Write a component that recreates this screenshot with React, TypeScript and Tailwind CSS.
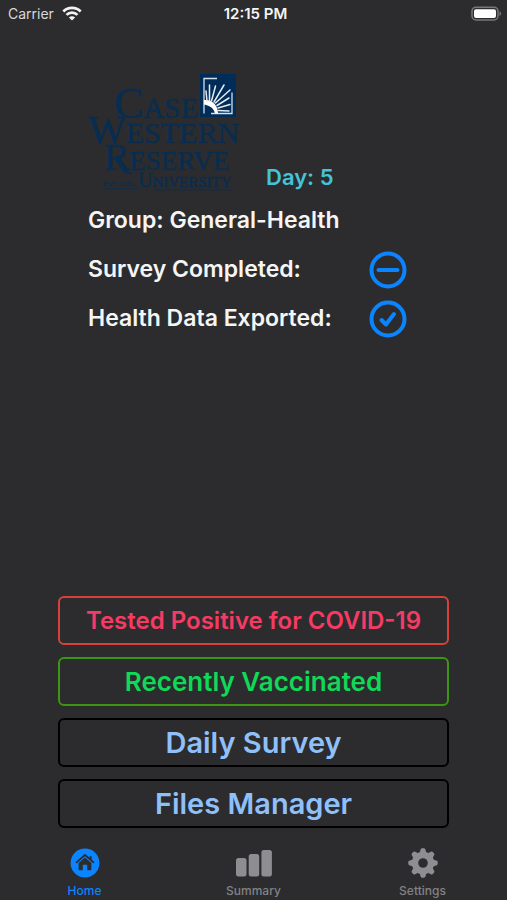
import type { ReactNode } from 'react';

function WifiIcon() {
  return (
    <svg className="h-4 w-5" viewBox="0 0 20 16" fill="none" stroke="#f2f2f2" strokeWidth="2.7" aria-hidden="true">
      <path d="M1.300 5.500a12.300 12.300 0 0 1 17.400 0" />
      <path d="M4.500 8.900a7.800 7.800 0 0 1 11 0" />
      <path d="M10 14.600 6.900 11.500a4.400 4.400 0 0 1 6.200 0Z" fill="#f2f2f2" stroke="none" />
    </svg>
  );
}

function BatteryIcon() {
  return (
    <svg className="h-4 w-8" viewBox="0 0 32 16" aria-hidden="true">
      <rect x="1" y="1.200" width="26" height="12.800" rx="4" fill="#2c2c2e" stroke="#77777a" strokeWidth="1.500" />
      <rect x="3" y="3.200" width="22" height="8.800" rx="2" fill="#fff" />
      <path d="M28.500 5.200c2.200 1 2.200 3.800 0 4.800Z" fill="#77777a" />
    </svg>
  );
}

function UniversityLogo() {
  return (
    <svg
      className="h-[120px] w-[154px]"
      viewBox="88 73 154 120"
      fill="#092d50"
      fontFamily="'Liberation Serif', serif"
      fontWeight="normal"
      role="img"
      aria-label="Case Western Reserve University"
    >
      <g stroke="#092d50" strokeWidth="0.500">
        <text x="114" y="118" fontSize="44">
          C<tspan fontSize="29">ASE</tspan>
        </text>
        <text x="88" y="143" fontSize="40">
          W<tspan fontSize="30">ESTERN</tspan>
        </text>
        <text x="104" y="170" fontSize="38">
          R<tspan fontSize="27">ESERVE</tspan>
        </text>
        <text x="138" y="187" fontSize="20">
          U<tspan fontSize="15">NIVERSITY</tspan>
        </text>
      </g>
      <path d="M118 154c5 9 8 17 15 20-8 2-13-4-18-16Z" />
      <text x="103" y="186" fontSize="7" fontWeight="bold">EST. 1826</text>
      <path d="M104 188.500h34M154 190h78" stroke="#092d50" strokeWidth="0.600" />
      <rect x="200" y="74" width="36" height="43" fill="#002c59" />
      <path d="M217 78.500h-13v35M211 113.500h21v-21" fill="none" stroke="#d5dfe8" strokeWidth="1.300" />
      <path d="M204 100c8-1 14 5 14 13.500h-3c-1-5-5-8-11-9Z" fill="#fff" />
      <path
        d="M207 101 206 91M209.500 101 209.500 85M211.500 101 215.500 86M214 102 224 85M215.500 103 230 90M217 105.500 229 98M218 108 230 104.500M218 110.500 229 111"
        stroke="#e4ebf2"
        strokeWidth="1.500"
        strokeLinecap="round"
      />
    </svg>
  );
}

function StatusIcon({ label, path }: { label: string; path: string }) {
  return (
    <svg
      className="size-[38px]"
      viewBox="0 0 38 38"
      fill="none"
      stroke="#0a84ff"
      strokeWidth="4"
      strokeLinecap="round"
      strokeLinejoin="round"
      role="img"
      aria-label={label}
    >
      <circle cx="19" cy="19" r="16.500" />
      <path d={path} />
    </svg>
  );
}

function HomeIcon() {
  return (
    <svg className="size-[30px]" viewBox="0 0 30 30" aria-hidden="true">
      <circle cx="15" cy="15" r="14.400" fill="#0a84ff" />
      <path d="M6.500 14.300 15 7l8.500 7.300" fill="none" stroke="#2c2c2e" strokeWidth="1.700" strokeLinecap="round" strokeLinejoin="round" />
      <path d="M19.500 8.200h2.200v4l-2.200-1.900ZM15 9.600l6.400 5.500v6.200a1 1 0 0 1-1 1h-3.200v-5.600h-4.400v5.600H9.600a1 1 0 0 1-1-1v-6.200Z" fill="#2c2c2e" />
    </svg>
  );
}

function BarsIcon() {
  return (
    <svg className="h-[30px] w-9" viewBox="0 0 36 30" fill="#8e8e92" aria-hidden="true">
      <rect x="0" y="10" width="10.500" height="18.500" rx="2.500" />
      <rect x="12.700" y="6" width="10.500" height="22.500" rx="2.500" />
      <rect x="25.400" y="2" width="10.500" height="26.500" rx="2.500" />
    </svg>
  );
}

function GearIcon() {
  const turns = [0, 45, 90, 135, 180, 225, 270, 315];
  return (
    <svg className="size-[30px]" viewBox="0 0 30 30" fill="#8e8e92" aria-hidden="true">
      <circle cx="15" cy="15" r="8" fill="none" stroke="#8e8e92" strokeWidth="6.400" />
      {turns.map((turn) => (
        <path
          key={turn}
          d="M11.500 5.500 12.500 1.700Q12.900 0.300 14.200 0.300h1.600Q17.100 0.300 17.500 1.700L18.500 5.500Z"
          transform={`rotate(${turn} 15 15)`}
        />
      ))}
    </svg>
  );
}

function Tab({ label, active, children }: { label: string; active?: boolean; children: ReactNode }) {
  return (
    <a
      href={`#${label.toLowerCase()}`}
      aria-current={active ? 'page' : undefined}
      className={`flex flex-col items-center gap-[5px] text-xs font-medium ${active ? 'text-[#0a84ff]' : 'text-[#828286]'}`}
    >
      {children}
      {label}
    </a>
  );
}

export default function App() {
  return (
    <div className="flex min-h-screen flex-col bg-[#2c2c2e] font-['Inter',sans-serif] text-[#f5f5f5]">
      <header className="grid h-7 grid-cols-3 items-center pr-1 pl-2 text-sm">
        <div className="flex items-center gap-2 text-[#d8d8da]">
          Carrier
          <WifiIcon />
        </div>
        <time className="text-center text-[15px] font-semibold">12:15 PM</time>
        <div className="flex justify-end">
          <BatteryIcon />
        </div>
      </header>

      <main className="flex grow flex-col">
        <section className="flex flex-col pt-[45px] pr-[100px] pl-[88px] text-[23px] font-semibold">
          <div className="flex items-end gap-6">
            <UniversityLogo />
            <p className="text-[22px] leading-8 text-[#45c3d8]">Day: 5</p>
          </div>
          <p className="mt-[3px] leading-[49px]">Group: General-Health</p>
          <div className="flex h-[49px] items-center justify-between">
            <p>Survey Completed:</p>
            <StatusIcon label="Not completed" path="M9.500 19h19" />
          </div>
          <div className="flex h-[49px] items-center justify-between">
            <p>Health Data Exported:</p>
            <StatusIcon label="Done" path="m12.500 20 4.500 4.500 8-10.500" />
          </div>
        </section>

        <div className="mt-auto flex flex-col gap-3 px-[58px] pb-5 font-semibold">
          <button type="button" className="h-[49px] rounded-md border-2 border-[#d6423a] text-2xl text-[#f53b63]">
            Tested Positive for COVID-19
          </button>
          <button type="button" className="h-[49px] rounded-md border-2 border-[#3c9612] text-[26px] text-[#10d858]">
            Recently Vaccinated
          </button>
          <button type="button" className="h-[49px] rounded-md border-2 border-black text-[29px] text-[#8fc0fa]">
            Daily Survey
          </button>
          <button type="button" className="h-[49px] rounded-md border-2 border-black text-[29px] text-[#8fc0fa]">
            Files Manager
          </button>
        </div>
      </main>

      <nav className="grid h-[52px] grid-cols-3">
        <Tab label="Home" active>
          <HomeIcon />
        </Tab>
        <Tab label="Summary">
          <BarsIcon />
        </Tab>
        <Tab label="Settings">
          <GearIcon />
        </Tab>
      </nav>
    </div>
  );
}
